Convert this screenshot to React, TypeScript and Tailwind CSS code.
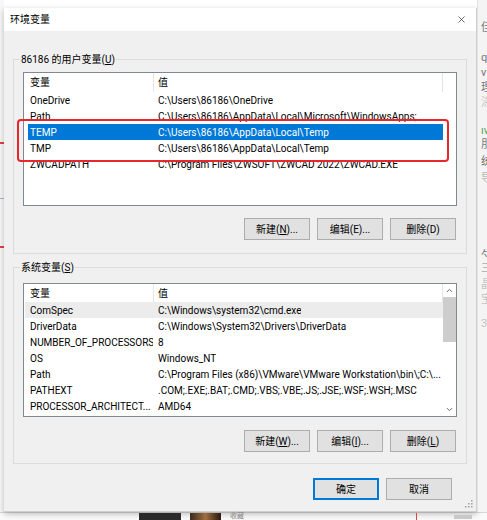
import { X, ChevronUp, ChevronDown } from "lucide-react";

type Row = { name: string; value: string; state?: "selected" | "hover" };

const userVars: Row[] = [
  { name: "OneDrive", value: "C:\\Users\\86186\\OneDrive" },
  { name: "Path", value: "C:\\Users\\86186\\AppData\\Local\\Microsoft\\WindowsApps;" },
  { name: "TEMP", value: "C:\\Users\\86186\\AppData\\Local\\Temp", state: "selected" },
  { name: "TMP", value: "C:\\Users\\86186\\AppData\\Local\\Temp" },
  { name: "ZWCADPATH", value: "C:\\Program Files\\ZWSOFT\\ZWCAD 2022\\ZWCAD.EXE" },
];

const sysVars: Row[] = [
  { name: "ComSpec", value: "C:\\Windows\\system32\\cmd.exe", state: "hover" },
  { name: "DriverData", value: "C:\\Windows\\System32\\Drivers\\DriverData" },
  { name: "NUMBER_OF_PROCESSORS", value: "8" },
  { name: "OS", value: "Windows_NT" },
  { name: "Path", value: "C:\\Program Files (x86)\\VMware\\VMware Workstation\\bin\\;C:\\..." },
  { name: "PATHEXT", value: ".COM;.EXE;.BAT;.CMD;.VBS;.VBE;.JS;.JSE;.WSF;.WSH;.MSC" },
  { name: "PROCESSOR_ARCHITECT...", value: "AMD64" },
  { name: "PROCESSOR_IDENTIFIER", value: "Intel64 Family 6 Model 140 Stepping 1, GenuineIntel" },
];

function Btn({ label, k, tail = "", underline = true }: { label: string; k: string; tail?: string; underline?: boolean }) {
  return (
    <button className="w-[66px] h-[22px] border border-[#adadad] bg-[#e1e1e1] flex items-center justify-center">
      {label}(<span className={underline ? "underline" : ""}>{k}</span>){tail}
    </button>
  );
}

function VarList({ rows, header, scroll }: { rows: Row[]; header: string; scroll?: boolean }) {
  return (
    <div className="h-[134px] border border-[#828790] bg-white flex overflow-hidden">
      <div className="flex-1 flex flex-col min-w-0">
        <div className={`${header} flex shrink-0 items-center`}>
          <div className="w-[130px] h-full pl-[6px] flex items-center border-r border-[#e5e5e5]">变量</div>
          <div className="flex-1 h-full pl-[4px] flex items-center border-r border-[#e5e5e5]">值</div>
        </div>
        {rows.map((r) => (
          <div
            key={r.name}
            className={`h-[16px] shrink-0 flex items-center whitespace-nowrap ${
              r.state === "selected"
                ? "ml-[4px] bg-[#0078d7] text-white"
                : r.state === "hover"
                ? "ml-[1px] bg-[#ececec]"
                : "ml-[4px]"
            }`}
          >
            <div className={`overflow-hidden shrink-0 ${r.state === "hover" ? "w-[128px] pl-[5px]" : "w-[125px] pl-[2px]"}`}>
              {r.name}
            </div>
            <div className="pl-[5px] overflow-hidden">{r.value}</div>
          </div>
        ))}
      </div>
      <div className="w-[13px] flex flex-col">
        {scroll && (
          <>
            <div className="h-[13px] flex items-center justify-center">
              <ChevronUp className="w-[9px] h-[9px] text-[#606060]" strokeWidth={2.5} />
            </div>
            <div className="h-[45px] bg-[#cdcdcd]" />
            <div className="flex-1" />
            <div className="h-[14px] flex items-center justify-center">
              <ChevronDown className="w-[9px] h-[9px] text-[#606060]" strokeWidth={2.5} />
            </div>
          </>
        )}
      </div>
    </div>
  );
}

const rightChars = [
  { c: "佳", mt: "mt-[22px]" },
  { c: "q", mt: "mt-[18px]" },
  { c: "v", mt: "mt-[3px]" },
  { c: "理", mt: "mt-[3px]" },
  { c: "涤", mt: "mt-[3px] opacity-40" },
  { c: "ıv", mt: "mt-[16px] text-[#5aa05a]" },
  { c: "刖", mt: "mt-[2px]" },
  { c: "统", mt: "mt-[5px]" },
  { c: "导", mt: "mt-[5px] opacity-50" },
  { c: "勺", mt: "mt-[65px]" },
  { c: "三", mt: "mt-[1px] opacity-60" },
  { c: "晶", mt: "mt-[4px] opacity-40" },
  { c: "宝", mt: "mt-[3px] opacity-40" },
  { c: "3", mt: "mt-[12px] opacity-40" },
];

export default function App() {
  return (
    <div className="w-[487px] h-[520px] relative overflow-hidden bg-white text-[10px] leading-[13px] text-black font-['Roboto','Noto_Sans_CJK_SC',sans-serif]">
      <div className="flex h-[512px]">
        {/* background window, left edge */}
        <div className="w-[4px] flex flex-col bg-[#f7f7f7]">
          <div className="mt-[142px] h-[2px] bg-[#e04040]" />
          <div className="mt-[54px] h-[1px] bg-[#9ab8d8]" />
          <div className="mt-[47px] h-[2px] bg-[#e04040]" />
        </div>

        {/* dialog */}
        <div className="w-[473px] mt-[8px] flex flex-col bg-[#f0f0f0] border-r border-b border-[#cfcfcf] shadow-[0_2px_6px_rgba(0,0,0,0.25)]">
          <div className="h-[24px] bg-white flex items-center justify-between pl-[6px] pr-[9px]">
            <span>环境变量</span>
            <X className="w-[11px] h-[11px] text-[#333]" strokeWidth={1.5} />
          </div>

          <div className="flex flex-col px-[9px]">
            <fieldset className="mt-[22px] border border-[#dcdcdc]">
              <legend className="ml-[6px] px-[1px] leading-[13px]">
                86186 的用户变量(<span className="underline">U</span>)
              </legend>
              <div className="px-[9px] pt-[6px] pb-[13px]">
                <VarList rows={userVars} header="h-[19px]" />
                <div className="flex justify-end gap-[7px] mt-[12px] pr-[1px]">
                  <Btn label="新建" k="N" tail="..." />
                  <Btn label="编辑" k="E" tail="..." underline={false} />
                  <Btn label="删除" k="D" underline={false} />
                </div>
              </div>
            </fieldset>

            <fieldset className="mt-[7px] border border-[#dcdcdc]">
              <legend className="ml-[6px] px-[1px] leading-[13px]">
                系统变量(<span className="underline">S</span>)
              </legend>
              <div className="px-[9px] pt-[9px] pb-[11px]">
                <VarList rows={sysVars} header="h-[18px]" scroll />
                <div className="flex justify-end gap-[7px] mt-[13px] pr-[1px]">
                  <Btn label="新建" k="W" tail="..." />
                  <Btn label="编辑" k="I" tail="..." />
                  <Btn label="删除" k="L" />
                </div>
              </div>
            </fieldset>

            <div className="flex justify-end gap-[7px] mt-[14px] pr-[15px]">
              <button className="w-[66px] h-[22px] border-2 border-[#0078d7] bg-[#e1e1e1] flex items-center justify-center">
                确定
              </button>
              <button className="w-[66px] h-[22px] border border-[#adadad] bg-[#e1e1e1] flex items-center justify-center">
                取消
              </button>
            </div>
          </div>

          <div className="flex-1 flex items-end justify-end pr-[3px] pb-[3px]">
            <svg width="8" height="8" viewBox="0 0 8 8" className="text-[#a0a0a0]">
              <rect x="6" y="0" width="1.5" height="1.5" fill="currentColor" />
              <rect x="3" y="3" width="1.5" height="1.5" fill="currentColor" />
              <rect x="6" y="3" width="1.5" height="1.5" fill="currentColor" />
              <rect x="0" y="6" width="1.5" height="1.5" fill="currentColor" />
              <rect x="3" y="6" width="1.5" height="1.5" fill="currentColor" />
              <rect x="6" y="6" width="1.5" height="1.5" fill="currentColor" />
            </svg>
          </div>
        </div>

        {/* background window, right edge */}
        <div className="flex-1 flex flex-col pl-[3px] bg-[#f4f4f4] text-[#777] text-[11px] leading-[12px] overflow-hidden border-l border-[#e2e2e2]">
          {rightChars.map((x, i) => (
            <span key={i} className={`whitespace-nowrap ${x.mt}`}>
              {x.c}
            </span>
          ))}
        </div>
      </div>

      {/* background below the dialog */}
      <div className="h-[8px] flex items-start bg-[#fafafa] border-t border-[#d8d8d8]">
        <div className="ml-[139px] w-[42px] h-full bg-[#2b2b2b]" />
        <div className="ml-[9px] w-[31px] h-full bg-gradient-to-r from-[#3a2a1c] via-[#a07040] to-[#2a1a10]" />
        <span className="ml-[9px] text-[7px] leading-[7px] text-[#888]">收藏</span>
        <div className="ml-auto mr-[37px] w-[1px] h-full bg-[#e04040]" />
        <div className="mr-[15px] w-[18px] h-[4px] mt-[2px] bg-[#c8c8c8]" />
      </div>

      {/* red annotation box */}
      <div className="absolute left-[17px] top-[119px] w-[432px] h-[43px] border-2 border-[#e8262b] rounded-[4px]" />
    </div>
  );
}
